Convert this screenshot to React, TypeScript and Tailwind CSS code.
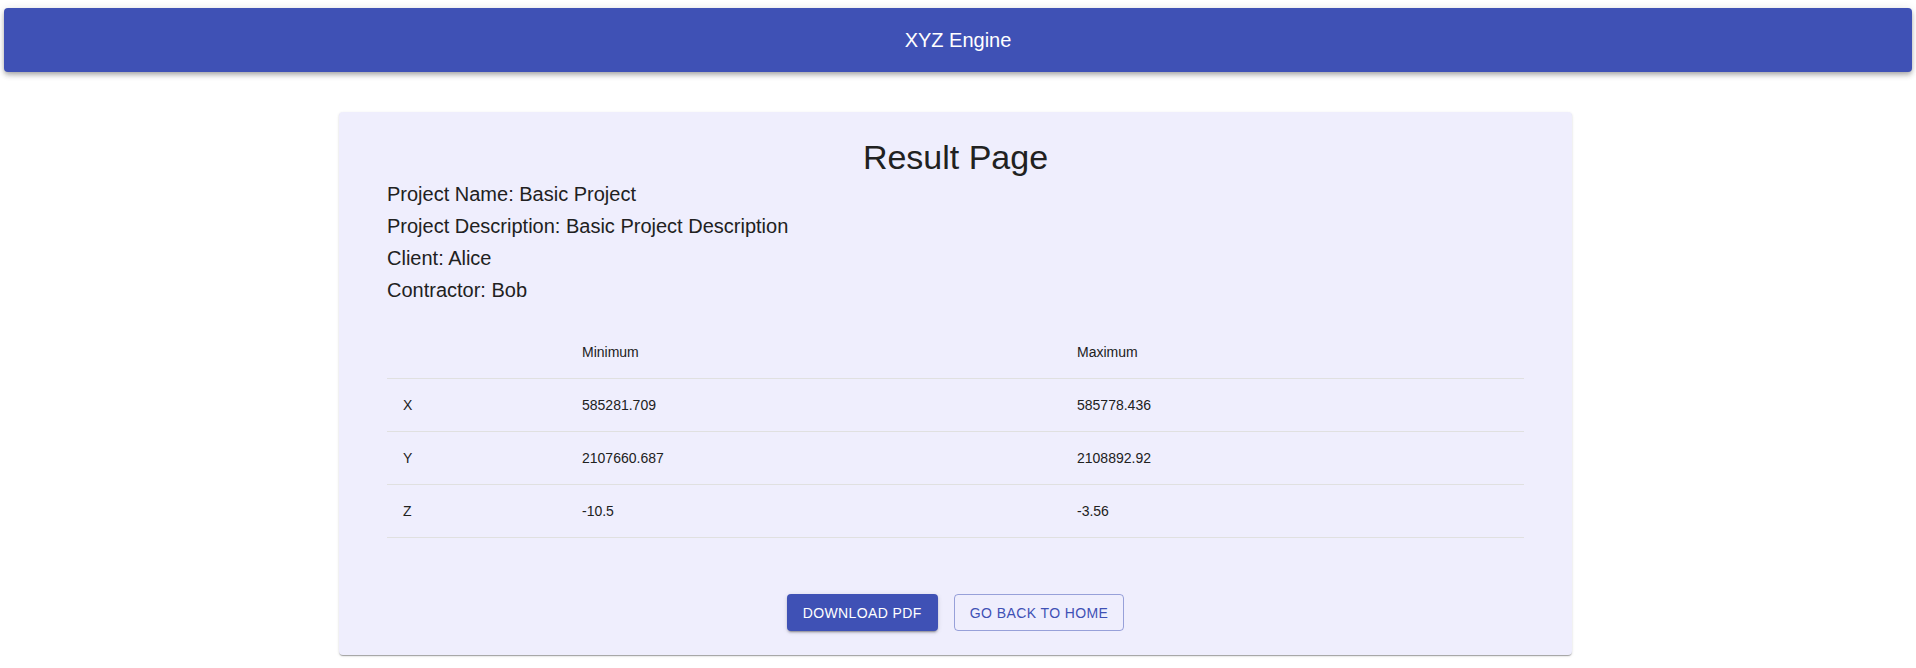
import React from 'react';

const rows = [
  { axis: 'X', min: '585281.709', max: '585778.436' },
  { axis: 'Y', min: '2107660.687', max: '2108892.92' },
  { axis: 'Z', min: '-10.5', max: '-3.56' },
];

export default function App() {
  return (
    <div className="min-h-screen bg-white pt-2 font-['Liberation_Sans',Arial,sans-serif] text-[#212121]">
      <header className="mx-1 flex h-16 items-center justify-center rounded bg-[#3f51b5] shadow-[0_2px_4px_-1px_rgba(0,0,0,0.2),0_4px_5px_0_rgba(0,0,0,0.14),0_1px_10px_0_rgba(0,0,0,0.12)]">
        <h1 className="text-[20px] leading-8 text-white">XYZ Engine</h1>
      </header>

      <div className="mt-10 flex justify-center pr-[5px]">
        <div className="w-[1233px] rounded bg-[#efeefd] px-12 pt-6 pb-6 shadow-[0_2px_1px_-1px_rgba(0,0,0,0.2),0_1px_1px_0_rgba(0,0,0,0.14),0_1px_3px_0_rgba(0,0,0,0.12)]">
          <h2 className="text-center text-[34px] leading-[42px]">Result Page</h2>

          <div className="text-[20px] leading-8">
            <p>Project Name: Basic Project</p>
            <p>Project Description: Basic Project Description</p>
            <p>Client: Alice</p>
            <p>Contractor: Bob</p>
          </div>

          <table className="mt-5 w-full table-fixed border-collapse text-left text-sm">
            <colgroup>
              <col className="w-[179px]" />
              <col className="w-[495px]" />
              <col />
            </colgroup>
            <thead>
              <tr className="border-b border-[#e0e0e0]">
                <th className="px-4 py-4 leading-5 font-normal"></th>
                <th className="px-4 py-4 leading-5 font-normal">Minimum</th>
                <th className="px-4 py-4 leading-5 font-normal">Maximum</th>
              </tr>
            </thead>
            <tbody>
              {rows.map((row) => (
                <tr key={row.axis} className="border-b border-[#e0e0e0]">
                  <td className="px-4 py-4 leading-5">{row.axis}</td>
                  <td className="px-4 py-4 leading-5">{row.min}</td>
                  <td className="px-4 py-4 leading-5">{row.max}</td>
                </tr>
              ))}
            </tbody>
          </table>

          <div className="mt-14 flex justify-center gap-4">
            <button className="h-[37px] rounded bg-[#3f51b5] px-4 text-sm tracking-[0.4px] text-white uppercase shadow-[0_3px_1px_-2px_rgba(0,0,0,0.2),0_2px_2px_0_rgba(0,0,0,0.14),0_1px_5px_0_rgba(0,0,0,0.12)]">
              Download PDF
            </button>
            <button className="h-[37px] rounded border border-[#3f51b5]/50 px-[15px] text-sm tracking-[0.4px] text-[#3f51b5] uppercase">
              Go back to home
            </button>
          </div>
        </div>
      </div>
    </div>
  );
}
